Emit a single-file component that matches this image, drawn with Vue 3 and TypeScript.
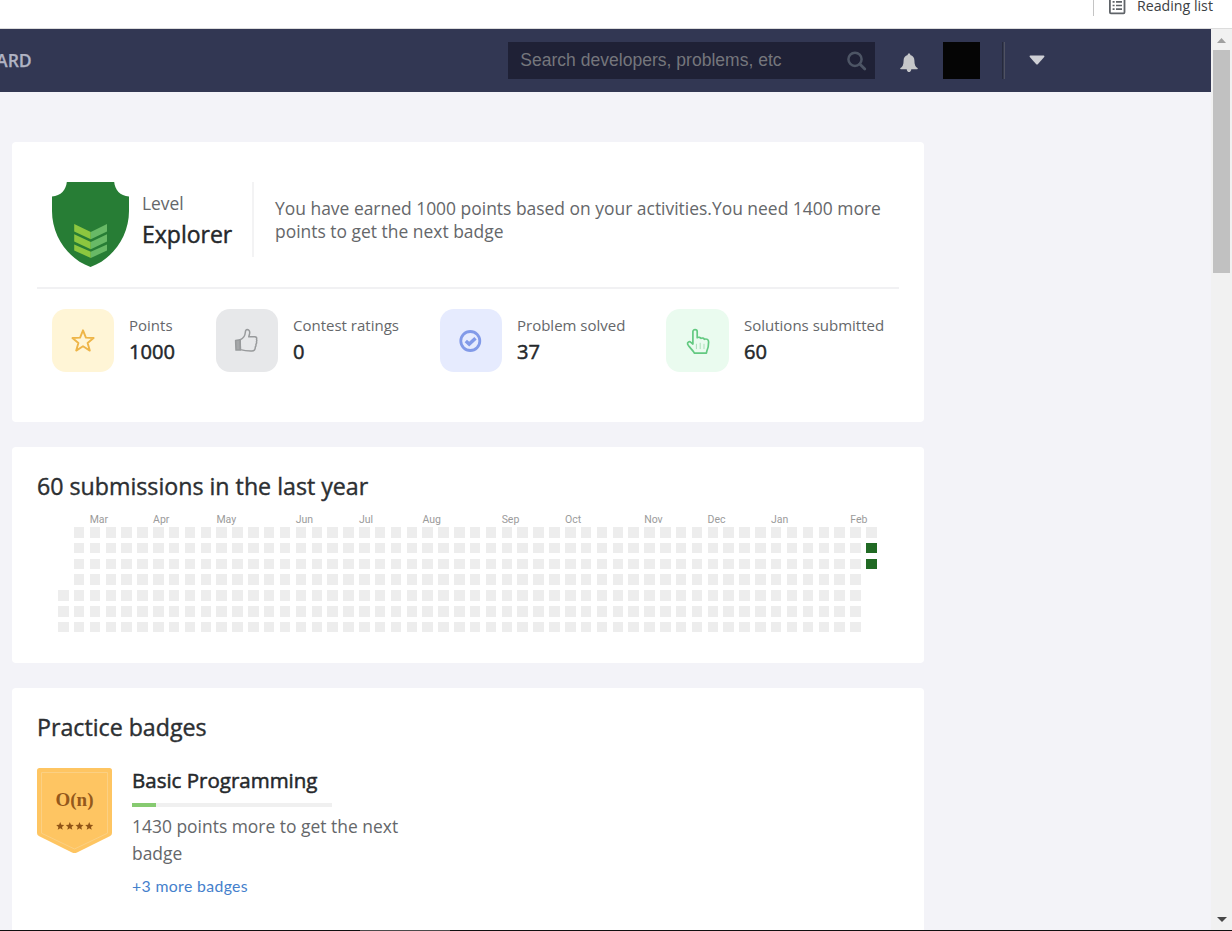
<script setup lang="ts">
interface Stat {
  kind: 'star' | 'thumb' | 'check' | 'hand'
  label: string
  value: string
}

const stats: Stat[] = [
  { kind: 'star', label: 'Points', value: '1000' },
  { kind: 'thumb', label: 'Contest ratings', value: '0' },
  { kind: 'check', label: 'Problem solved', value: '37' },
  { kind: 'hand', label: 'Solutions submitted', value: '60' },
]

const months: { name: string; column: number }[] = [
  { name: 'Mar', column: 3 },
  { name: 'Apr', column: 7 },
  { name: 'May', column: 11 },
  { name: 'Jun', column: 16 },
  { name: 'Jul', column: 20 },
  { name: 'Aug', column: 24 },
  { name: 'Sep', column: 29 },
  { name: 'Oct', column: 33 },
  { name: 'Nov', column: 38 },
  { name: 'Dec', column: 42 },
  { name: 'Jan', column: 46 },
  { name: 'Feb', column: 51 },
]

const WEEKS = 52
const days: { key: number; state: string }[] = []
for (let week = 0; week < WEEKS; week++) {
  for (let day = 0; day < 7; day++) {
    let state = ''
    if ((week === 0 && day < 4) || (week === WEEKS - 1 && day > 2)) state = 'blank'
    else if (week === WEEKS - 1 && day > 0) state = 'active'
    days.push({ key: week * 7 + day, state })
  }
}

const progress = 12
const badgeStars = [23.2, 32.8, 42.5, 52.2]
</script>

<template>
  <div class="window">
    <div class="toolbar">
      <span class="toolbar-sep"></span>
      <svg class="list-icon" width="18" height="18" viewBox="0 0 18 18">
        <rect x="1.9" y="1" width="14.6" height="15.3" rx="1" fill="none" stroke="#5f6368" stroke-width="1.8" />
        <path d="M4.6 4.9h2M4.6 8.5h2M4.6 12.1h2M8 4.9h6M8 8.5h6M8 12.1h6" stroke="#5f6368" stroke-width="1.6" />
      </svg>
      <span class="reading">Reading list</span>
    </div>

    <div class="viewport">
      <div class="page">
        <header class="nav">
          <span class="nav-item">ARD</span>
          <div class="search">
            <span>Search developers, problems, etc</span>
            <svg width="20" height="20" viewBox="0 0 20 20">
              <circle cx="8" cy="8.3" r="6.6" fill="none" stroke="#4d5565" stroke-width="2.5" />
              <path d="M12.800 13l5 5" stroke="#4d5565" stroke-width="2.8" stroke-linecap="round" />
            </svg>
          </div>
          <svg class="bell" width="18" height="20" viewBox="0 0 18 20">
            <path d="M9 0.4c.8 0 1.3.5 1.3 1.2v.5c2.6.6 4.1 2.7 4.1 5.3 0 4.2 1 6.300 3.100 7.600.5.3.3 1.200-.3 1.200H11.300c-.2 1.800-1.100 2.900-2.300 2.900s-2.100-1.100-2.300-2.900H.8c-.6 0-.8-.9-.3-1.200C2.600 13.700 3.600 11.600 3.600 7.400c0-2.600 1.500-4.700 4.100-5.300v-.5C7.700.9 8.200.4 9 .4z" fill="#c6c7ca" />
          </svg>
          <span class="avatar"></span>
          <span class="nav-sep"></span>
          <svg class="caret" width="16" height="10" viewBox="0 0 16 10">
            <path d="M1.300 0.500h13.400q1.300.2.5 1.400L9 8.900q-1 1-2 0L.8 1.900Q0 .7 1.300.5z" fill="#cfd0d6" />
          </svg>
        </header>

        <main class="cards">
          <section class="card overview">
            <div class="level">
              <svg class="shield" width="77" height="85" viewBox="0 0 77 85">
                <path d="M14.800 0H62.200C62.800 7.500 68 14 77 14.500V29C77 54 61 77 38.500 85C16 77 0 54 0 29V14.500C9 14 14.200 7.500 14.800 0z" fill="#277d35" />
                <path d="M22.200 42l16.600 8v7.200l-16.600-7.800zM22.200 52.200l16.600 7.800v7.200l-16.600-7.800zM22.200 62.400l16.600 7.300v6.200l-16.600-7.300z" fill="#8cc63f" />
                <path d="M55 42l-16.200 8v7.200l16.200-7.800zM55 52.200l-16.200 7.800v7.200l16.200-7.800zM55 62.400l-16.200 7.300v6.200l16.200-7.300z" fill="#68b966" />
              </svg>
              <div class="level-name">
                <span class="level-label">Level</span>
                <strong>Explorer</strong>
              </div>
              <p class="level-text">You have earned 1000 points based on your activities.You need 1400 more points to get the next badge</p>
            </div>

            <div class="stats">
              <div v-for="stat in stats" :key="stat.kind" class="stat">
                <span class="tile" :class="stat.kind">
                  <svg v-if="stat.kind === 'star'" width="26" height="26" viewBox="0 0 26 26" fill="none" stroke="#eeb548" stroke-width="1.900" stroke-linejoin="round">
                    <path d="M13 2.300l2.900 7.300 7.700.4-6 4.900 2.200 7.700L13 18.300l-6.800 4.300 2.200-7.700-6-4.900 7.700-.4z" />
                  </svg>
                  <svg v-else-if="stat.kind === 'thumb'" width="26" height="26" viewBox="0 0 26 26" fill="none" stroke="#989a9c" stroke-width="1.500" stroke-linejoin="round">
                    <path d="M1.600 12.400l4.500-.7.300 10.200-4.400.200z" fill="#a5a7a9" />
                    <path d="M6.200 11.700c3.200-1.400 4.800-3.500 5.100-7.200.1-2 .9-2.900 2-2.900 1.900.1 2.700 1.800 2.300 4l-.8 3.200h6c1.600 0 2.200 1.100 1.700 2.500.4.8.4 1.700-.1 2.500.4.900.2 1.900-.5 2.600.2 1 0 1.900-.6 2.500.1 2.700-1.200 4-3.400 4-4.200.1-7.500-.2-11.500-1.300z" />
                  </svg>
                  <svg v-else-if="stat.kind === 'check'" width="26" height="26" viewBox="0 0 26 26" fill="none" stroke="#829ae8">
                    <circle cx="12.300" cy="13" r="9.500" stroke-width="2.800" />
                    <path d="M7.800 12.900l3.400 3.200 6.300-5.900" stroke-width="3.400" />
                  </svg>
                  <svg v-else width="26" height="26" viewBox="0 0 26 26" fill="none" stroke="#63c981" stroke-width="1.700" stroke-linejoin="round" stroke-linecap="round">
                    <path d="M7.900 16V3.600c0-2.600 4.300-2.600 4.300 0v6.100c1.300-.9 3.100-.4 3.700.7 1.300-.8 2.900-.3 3.500.9 2.300-.8 4.200.1 4.200 2.700 0 4-.3 6.500-1.800 9.200l-.4 1.900H9.300c-.3-2-6-6.500-6.700-9-.5-2.100 1.800-3.200 3.300-1.800z" />
                    <path d="M11.400 16.200v4.500M15.200 15.200v5.500M19 16.200v4.500" stroke="#a9dfb9" stroke-width="1" />
                  </svg>
                </span>
                <div class="stat-text">
                  <span class="stat-label">{{ stat.label }}</span>
                  <span class="stat-value">{{ stat.value }}</span>
                </div>
              </div>
            </div>
          </section>

          <section class="card activity">
            <h2>60 submissions in the last year</h2>
            <div class="months">
              <span v-for="month in months" :key="month.name" :style="{ gridColumnStart: month.column }">{{ month.name }}</span>
            </div>
            <div class="heatmap">
              <i v-for="day in days" :key="day.key" :class="day.state"></i>
            </div>
          </section>

          <section class="card practice">
            <h2>Practice badges</h2>
            <div class="badge-row">
              <svg class="badge" width="75" height="86" viewBox="0 0 75 86">
                <path d="M2.500 0h70Q75 0 75 2.500V65Q75 67 73.200 68L40 84.500q-2.500 1.200-5 0L1.800 68Q0 67 0 65V2.500Q0 0 2.500 0z" fill="#fec562" />
                <path d="M4.500 4.500h66v60.700L37.500 81l-33-15.800z" fill="none" stroke="#fbd083" stroke-width="1" />
                <text x="37.500" y="37.800" text-anchor="middle" class="badge-label">O(n)</text>
                <path v-for="x in badgeStars" :key="x" :transform="`translate(${x} 58)`" d="M0-3.900l1.100 2.700 2.900.2-2.200 1.900.7 2.800L0 2.200l-2.500 1.500.7-2.800L-4-1l2.900-.2z" fill="#8f5416" />
              </svg>
              <div class="badge-info">
                <h3>Basic Programming</h3>
                <div class="bar"><div class="fill" :style="{ width: progress + '%' }"></div></div>
                <p>1430 points more to get the next badge</p>
                <a>+3 more badges</a>
              </div>
            </div>
          </section>
        </main>
      </div>

      <div class="scrollbar">
        <svg width="9" height="5" viewBox="0 0 9 5"><path d="M0 5L4.500 0 9 5z" fill="#a0a0a0" /></svg>
        <div class="thumb-bar"></div>
        <svg class="down" width="10" height="5" viewBox="0 0 10 5"><path d="M0 0h10L5 5z" fill="#484848" /></svg>
      </div>
    </div>
    <div class="taskbar"><span></span></div>
  </div>
</template>

<style>
body {
  background: #fff;
  overflow: hidden;
}
</style>

<style scoped>
.window {
  box-sizing: border-box;
  width: 1232px;
  height: 931px;
  display: flex;
  flex-direction: column;
  overflow: hidden;
  font-family: "Open Sans", sans-serif;
  color: #65676a;
}
svg {
  display: block;
  flex: none;
}
h2,
h3,
p {
  margin: 0;
}
.toolbar {
  flex: none;
  box-sizing: border-box;
  height: 29px;
  border-bottom: 1px solid #dcdcdc;
  display: flex;
  align-items: flex-start;
  padding-left: 1093px;
}
.toolbar-sep {
  width: 1px;
  height: 16px;
  background: #c4c4c4;
}
.list-icon {
  margin: -3px 10px 0 14px;
}
.reading {
  font-size: 14.2px;
  line-height: 20px;
  margin: -4px 0 0 1px;
  color: #3c4043;
  white-space: nowrap;
}
.viewport {
  flex: 1;
  min-height: 0;
  display: flex;
}
.page {
  width: 1211px;
  background: #f3f3f8;
  overflow: hidden;
}
.nav {
  height: 63px;
  background: #323753;
  display: flex;
  align-items: center;
}
.nav-item {
  width: 36px;
  margin: -1px 0 0 -4px;
  font-size: 17.6px;
  line-height: 24px;
  font-weight: 600;
  -webkit-text-stroke: 0.25px #b0b3c3;
  color: #b0b3c3;
  white-space: nowrap;
}
.search {
  box-sizing: border-box;
  width: 367px;
  height: 37px;
  margin-left: 476px;
  padding: 0 8px 0 12.3px;
  background: #1f2136;
  display: flex;
  align-items: center;
  justify-content: space-between;
  font: 17.5px/37px "Liberation Sans", Arial, sans-serif;
  letter-spacing: 0.02px;
  color: #75767c;
}
.bell {
  margin: 4px 0 0 25px;
}
.avatar {
  width: 37px;
  height: 37px;
  margin-left: 25px;
  background: #050505;
}
.nav-sep {
  box-sizing: border-box;
  width: 3px;
  height: 37px;
  margin-left: 22px;
  border-left: 1px solid #262a3c;
  border-right: 1px solid #4f5262;
  background: #35394e;
}
.caret {
  margin: -1px 0 0 23.500px;
}
.cards {
  width: 912px;
  margin: 50px 0 0 12px;
  display: flex;
  flex-direction: column;
  gap: 25px;
}
.card {
  box-sizing: border-box;
  background: #fff;
  border-radius: 4px;
  padding: 0 25px;
}
.overview {
  height: 280px;
  padding-top: 40px;
}
.level {
  height: 105px;
  display: flex;
  align-items: flex-start;
  padding-left: 15px;
  border-bottom: 2px solid #f1f1f3;
}
.level-name {
  box-sizing: border-box;
  width: 112px;
  height: 75px;
  padding-top: 7px;
  margin-left: 13px;
  border-right: 2px solid #f3f3f4;
  display: flex;
  flex-direction: column;
}
.level-label {
  font-size: 17.4px;
  line-height: 28px;
}
.level-name strong {
  font-size: 23px;
  line-height: 34px;
  font-weight: 400;
  -webkit-text-stroke: 0.45px #25282b;
  color: #25282b;
}
.level-text {
  width: 612px;
  margin: 15px 0 0 21px;
  font-size: 17.45px;
  line-height: 23px;
}
.stats {
  display: grid;
  grid-template-columns: 164px 224px 226px auto;
  padding: 20px 0 0 15px;
}
.stat {
  display: flex;
}
.tile {
  flex: none;
  width: 62px;
  height: 63px;
  border-radius: 14px;
  display: flex;
  align-items: center;
  justify-content: center;
}
.star { background: #fff5d6; }
.thumb { background: #e7e8ea; }
.check { background: #e6ebfe; }
.hand { width: 63px; background: #eafbef; }
.stat-text {
  display: flex;
  flex-direction: column;
  padding: 4px 0 0 15px;
  white-space: nowrap;
}
.stat-label {
  font-size: 15px;
  line-height: 24px;
}
.stat-value {
  font-size: 20.1px;
  line-height: 30px;
  font-weight: 400;
  -webkit-text-stroke: 0.5px #25282b;
  color: #25282b;
}
h2 {
  font-size: 23.2px;
  line-height: 34px;
  font-weight: 400;
  -webkit-text-stroke: 0.4px #2c2f32;
  color: #2c2f32;
}
.activity {
  height: 216px;
  padding-top: 22px;
}
.months {
  display: grid;
  grid-template-columns: repeat(52, 15.85px);
  margin: 10px 0 0 21px;
  height: 14px;
  font: 10.5px/14px Roboto, sans-serif;
  color: #9b9b9b;
}
.months span {
  grid-row: 1;
  width: 26px;
}
.heatmap {
  display: grid;
  grid-auto-flow: column;
  grid-template-rows: repeat(7, 10.5px);
  grid-auto-columns: 10.5px;
  gap: 5.34px 5.35px;
  margin-left: 21px;
}
.heatmap i {
  background: #ededed;
}
.heatmap .blank {
  background: none;
}
.heatmap .active {
  background: #216a24;
}
.practice {
  height: 260px;
  padding-top: 22px;
}
.badge-row {
  display: flex;
  margin-top: 24px;
}
.badge-label {
  font: 700 19px "Liberation Serif", serif;
  fill: #94581b;
}
.badge-info {
  width: 280px;
  margin-left: 20px;
}
h3 {
  font-size: 20.5px;
  line-height: 26px;
  margin-top: -1px;
  font-weight: 400;
  -webkit-text-stroke: 0.5px #25282b;
  color: #25282b;
}
.bar {
  width: 200px;
  height: 4px;
  margin-top: 10px;
  background: #f0f0f0;
}
.fill {
  height: 4px;
  background: #86ca70;
}
.badge-info p {
  margin-top: 6px;
  font-size: 17.45px;
  line-height: 27px;
}
.badge-info a {
  display: block;
  margin-top: 6px;
  font: 15.800px/26px Lato, sans-serif;
  letter-spacing: 0.36px;
  color: #4480cc;
}
.scrollbar {
  width: 21px;
  background: #f1f1f1;
  display: flex;
  flex-direction: column;
  align-items: center;
  padding-top: 9px;
}
.thumb-bar {
  width: 17px;
  height: 223px;
  margin-top: 7px;
  background: #c1c1c1;
}
.down {
  margin: auto 0 8px;
}
.taskbar {
  flex: none;
  height: 1px;
  background: #101010;
  padding-left: 360px;
}
.taskbar span {
  display: block;
  width: 90px;
  height: 1px;
  background: #4a4a4a;
}
</style>
